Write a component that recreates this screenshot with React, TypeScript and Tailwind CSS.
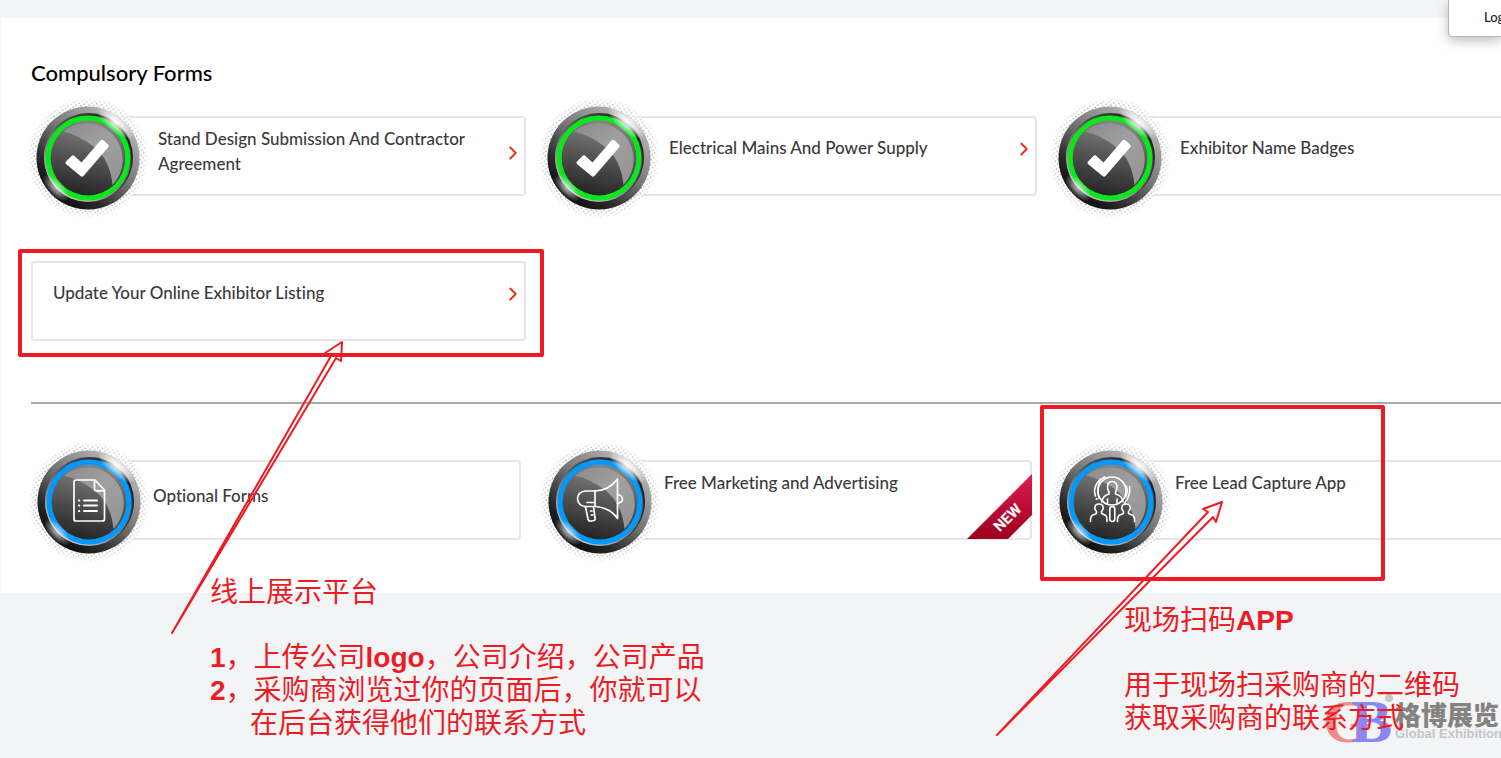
import { ReactNode } from 'react';
import { ChevronRight } from 'lucide-react';

type Form = {
  title: string;
  pad: string;
  icon?: ReactNode;
  arrow?: string;
  isNew?: boolean;
};

const CheckGlyph = () => (
  <path
    d="M38 63.500L43.500 58Q45 56.500 46.500 58L53.500 64.500L72.500 42.500Q74 41 75.500 42.500L80 46.500Q81.500 48 80 49.500L55.500 78Q54 79.500 52.500 78L38 66Q36.700 64.800 38 63.500Z"
    fill="#fff"
  />
);

const DocumentGlyph = () => (
  <g fill="none" stroke="#fff" strokeWidth="1.700" strokeLinejoin="round" strokeLinecap="round">
    <path d="M47 38H66L75.500 48V77Q75.500 79 73.500 79H47Q45 79 45 77V40Q45 38 47 38Z" />
    <path d="M65.500 38.500V47Q65.500 48.800 67.300 48.800H75" />
    <path d="M55 58.500H68M55 63.500H68M55 69H68" strokeWidth="2" />
    <path d="M50 58.500H50.200M50 63.500H50.200M50 69H50.200" strokeWidth="2.200" />
  </g>
);

const MegaphoneGlyph = () => (
  <g fill="none" stroke="#fff" strokeWidth="1.700" strokeLinejoin="round" strokeLinecap="round">
    <path d="M55 49H45Q38 50 37.500 56.500Q38 63.500 45 64.500H55Z" />
    <path d="M55 49Q69 48.500 77.500 37V76.500Q70 65.500 55 64.500" />
    <path d="M77.500 52.500Q82.500 53.500 82.500 57Q82.500 60.500 77.500 61.500" />
    <path d="M47 60.500H54.500" />
    <path d="M45.500 65L48 77Q48.500 79.500 51 79L54 78.500Q55.500 78 55 76L53.500 65" />
    <path d="M50.500 69H52M51.300 73H52.800" />
  </g>
);

const PeopleGlyph = () => (
  <g fill="none" stroke="#fff" strokeWidth="1.600" strokeLinejoin="round" strokeLinecap="round">
    <circle cx="61" cy="49" r="14" />
    <path d="M54 35Q44.500 39 43.500 48.500Q43.500 51 44.500 54M78.500 44.500Q80 53 73.500 61.500" />
    <path d="M49 39Q45 47 48 56.500M75.500 44Q77.500 50 74.500 55" strokeWidth="1.300" />
    <path d="M45.500 57H45.700" strokeWidth="2.200" />
    <path d="M58 52V50Q56.500 48 56.500 45Q56.500 39.500 61.200 39.500Q66 39.500 66 45Q66 48 64.500 50V52Q71.500 53.500 72 60M58 52Q51.500 53.500 51 60M56.500 57V61M66 57V61" />
    <rect x="58.800" y="64.500" width="5" height="15" rx="2.500" />
    <path d="M39.500 79.500V77.500Q39.500 73.500 43 72.500L45.500 71.500V69.500Q43.800 68 43.800 66Q43.800 62 48 62Q52.200 62 52.200 66Q52.200 68 50.500 69.500V71.500L53 72.500Q56 73.500 56 77.500V79.500" />
    <path d="M66.500 79.500V77.500Q66.500 73.500 70 72.500L72.500 71.500V69.500Q70.800 68 70.800 66Q70.800 62 75 62Q79.200 62 79.200 66Q79.200 68 77.500 69.500V71.500L80 72.500Q83.500 73.500 83.500 77.500V79.500" />
  </g>
);

// shared gradients for the round badges
const BadgeDefs = () => (
  <svg className="absolute h-0 w-0" aria-hidden="true">
    <defs>
      <linearGradient id="rim" x1="0.850" y1="0.150" x2="0.250" y2="0.900">
        <stop offset="0" stopColor="#b5b5b5" />
        <stop offset="0.450" stopColor="#777" />
        <stop offset="0.800" stopColor="#2b2b2b" />
        <stop offset="1" stopColor="#111" />
      </linearGradient>
      <linearGradient id="edge" x1="1" y1="0.200" x2="0" y2="0.800">
        <stop offset="0" stopColor="#161616" />
        <stop offset="0.600" stopColor="#555" />
        <stop offset="1" stopColor="#c4c4c4" />
      </linearGradient>
      <linearGradient id="lip" x1="0.800" y1="0" x2="0.200" y2="1">
        <stop offset="0" stopColor="#222" />
        <stop offset="0.500" stopColor="#777" />
        <stop offset="1" stopColor="#c9c9c9" />
      </linearGradient>
      <linearGradient id="disc" x1="0.700" y1="0" x2="0.500" y2="1">
        <stop offset="0" stopColor="#888" />
        <stop offset="0.500" stopColor="#565656" />
        <stop offset="1" stopColor="#262626" />
      </linearGradient>
      <linearGradient id="gloss" x1="0" y1="0" x2="0.800" y2="1">
        <stop offset="0" stopColor="#8a8a8a" />
        <stop offset="0.500" stopColor="#a0a0a0" />
        <stop offset="1" stopColor="#949494" />
      </linearGradient>
      <radialGradient id="shine">
        <stop offset="0" stopColor="#fff" stopOpacity="1" />
        <stop offset="0.350" stopColor="#fff" stopOpacity="0.750" />
        <stop offset="1" stopColor="#fff" stopOpacity="0" />
      </radialGradient>
      <radialGradient id="fade">
        <stop offset="0.860" stopColor="#fff" stopOpacity="0.900" />
        <stop offset="1" stopColor="#fff" stopOpacity="0.150" />
      </radialGradient>
      <pattern id="dots" width="5" height="5" patternUnits="userSpaceOnUse" patternTransform="rotate(10)">
        <circle cx="1.200" cy="1.200" r="0.700" fill="#666" />
        <circle cx="3.700" cy="3.700" r="0.700" fill="#666" />
      </pattern>
      <mask id="halo">
        <circle cx="60" cy="60" r="60" fill="url(#fade)" />
      </mask>
    </defs>
  </svg>
);

const Badge = ({ ring, children }: { ring: string; children: ReactNode }) => (
  <svg viewBox="0 0 120 120" className="relative z-10 -mt-[18px] -mb-[22px] h-[120px] w-[120px] shrink-0" aria-hidden="true">
    <circle cx="60" cy="60" r="58" fill="#fff" fillOpacity="0.700" />
    <circle cx="60" cy="60" r="60" fill="url(#dots)" mask="url(#halo)" />
    <circle cx="60" cy="60" r="51.500" fill="url(#rim)" />
    <circle cx="60.500" cy="59.500" r="44.500" fill="url(#edge)" />
    <circle cx="59.800" cy="60.200" r="43.500" fill="url(#lip)" />
    <circle cx="60" cy="60" r="39.700" fill="none" stroke={ring} strokeWidth="5.400" />
    <circle cx="60" cy="60" r="37.400" fill="url(#disc)" />
    <path d="M35 33.500A36.500 36.500 0 0 1 84.500 87Q82 61 65 48Q50 37 35 33.500Z" fill="url(#gloss)" />
    <ellipse cx="88" cy="24" rx="24" ry="10" transform="rotate(40 88 24)" fill="url(#shine)" />
    <ellipse cx="28" cy="90" rx="17" ry="8" transform="rotate(46 28 90)" fill="url(#shine)" opacity="0.650" />
    {children}
  </svg>
);

const FormCard = ({ form, inset = 'pl-[68px]' }: { form: Form; inset?: string }) => (
  <a href="#" className="flex items-start text-[17px] leading-[25px] font-medium text-[#3a3a3a]">
    {form.icon}
    <div
      className={`relative flex min-h-20 flex-1 border-2 border-[#e6e6e6] ${
        form.icon ? `-ml-[60px] rounded-[4px] ${inset}` : 'rounded-[3px] pl-5'
      }`}
    >
      <span className={`flex-1 ${form.pad}`}>{form.title}</span>
      {form.arrow && <ChevronRight size={22} strokeWidth={2} className={`ml-5 shrink-0 text-[#e8300c] ${form.arrow}`} />}
      {form.isNew && (
        <svg viewBox="0 0 65 65" className="absolute -right-0.5 -bottom-px h-[65px] w-[65px]">
          <defs>
            <linearGradient id="ribbon" x1="0" y1="0" x2="0" y2="1">
              <stop offset="0" stopColor="#e01a4f" />
              <stop offset="1" stopColor="#9c001d" />
            </linearGradient>
          </defs>
          <path d="M0 65L65 0V41L41 65Z" fill="url(#ribbon)" />
          <text
            x="40"
            y="49"
            transform="rotate(-45 40 43)"
            textAnchor="middle"
            className="fill-white font-['Roboto'] text-[15px] font-bold"
          >
            NEW
          </text>
        </svg>
      )}
    </div>
  </a>
);

const green = '#0ae81c';
const blue = '#0099ff';

const compulsory: Form[] = [
  { title: 'Stand Design Submission And Contractor Agreement', pad: 'pt-2', icon: <Badge ring={green}><CheckGlyph /></Badge>, arrow: 'mt-6' },
  { title: 'Electrical Mains And Power Supply', pad: 'pt-[17px]', icon: <Badge ring={green}><CheckGlyph /></Badge>, arrow: 'mt-5' },
  { title: 'Exhibitor Name Badges', pad: 'pt-[17px]', icon: <Badge ring={green}><CheckGlyph /></Badge>, arrow: 'mt-5' },
  { title: 'Update Your Online Exhibitor Listing', pad: 'pt-[17px]', arrow: 'mt-5' },
];

const optional: Form[] = [
  { title: 'Optional Forms', pad: 'pt-[21px]', icon: <Badge ring={blue}><DocumentGlyph /></Badge> },
  { title: 'Free Marketing and Advertising', pad: 'pt-2', icon: <Badge ring={blue}><MegaphoneGlyph /></Badge>, isNew: true },
  { title: 'Free Lead Capture App', pad: 'pt-2', icon: <Badge ring={blue}><PeopleGlyph /></Badge> },
];

// hand-drawn notes that lie over the page
const Annotations = () => (
  <div className="pointer-events-none absolute inset-0 z-20 font-['Liberation_Sans','Noto_Sans_CJK_SC',sans-serif] text-[28px] leading-[33px] whitespace-nowrap text-[#ed1c24]">
    <div className="absolute top-[249px] left-[18px] h-[108px] w-[526px] rounded-[2px] border-4 border-[#ed1c24]" />
    <div className="absolute top-[405px] left-[1040px] h-[176px] w-[345px] rounded-[2px] border-4 border-[#ed1c24]" />
    <svg width="1501" height="758" className="absolute top-0 left-0" fill="none" stroke="#ed1c24" strokeWidth="2" strokeLinejoin="round">
      <path d="M172 633L331 356L325 353L342 342L341 361L336 358Z" />
      <path d="M997 735L1208 512L1203 509L1222 502L1216 522L1213 517Z" />
    </svg>
    <div className="absolute top-[576px] left-[210px]">
      <p className="mb-8">线上展示平台</p>
      <p><b className="font-bold">1</b>，上传公司<b className="font-bold">logo</b>，公司介绍，公司产品</p>
      <p><b className="font-bold">2</b>，采购商浏览过你的页面后，你就可以</p>
      <p className="pl-10">在后台获得他们的联系方式</p>
    </div>
    <div className="absolute top-[604px] left-[1124px]">
      <p className="mb-8">现场扫码<b className="font-bold">APP</b></p>
      <p>用于现场扫采购商的二维码</p>
      <p>获取采购商的联系方式</p>
    </div>
  </div>
);

const Watermark = () => (
  <div className="pointer-events-none absolute top-[692px] left-[1324px] z-10 flex">
    <svg width="71" height="56" viewBox="0 0 71 56" className="overflow-visible font-['Liberation_Serif'] text-[62px] font-bold">
      <text x="-1" y="50" fill="#f08c8c">G</text>
      <text x="27" y="50" fill="#8a86f4">B</text>
      <circle cx="65" cy="6" r="4" fill="#c9c9c9" />
    </svg>
    <div className="whitespace-nowrap">
      <div className="pt-1.5 font-['Noto_Sans_CJK_SC',sans-serif] text-[26px] leading-8 font-black text-[#85827f]">格博展览</div>
      <div className="-mt-1 font-['Liberation_Sans'] text-[13px] leading-4 font-bold text-[#c6c6c6]">Global Exhibition</div>
    </div>
  </div>
);

export default function App() {
  return (
    <div className="relative min-h-screen overflow-hidden bg-[#f2f4f6] pt-[18px] font-['Lato',sans-serif] [font-variant-ligatures:none]">
      <BadgeDefs />
      <button className="absolute top-0 right-0 z-10 h-[37px] w-[53px] overflow-hidden rounded-bl-[4px] border-b border-l border-[#b8b8b8] bg-white pl-[35px] text-left text-[13px] font-medium text-[#222] shadow-[0_4px_12px_rgba(0,0,0,0.25)]">
        Log
      </button>
      <main className="ml-px bg-white pt-[41px] pb-[53px] pl-[30px]">
        <h2 className="mb-[29px] text-[22px] leading-7 font-medium text-black">Compulsory Forms</h2>
        <div className="-mr-[47px] grid grid-cols-3 gap-x-4 gap-y-[65px]">
          {compulsory.map((form) => (
            <div key={form.title} className={form.icon ? '-ml-[3px]' : ''}>
              <FormCard form={form} />
            </div>
          ))}
        </div>
        <hr className="mt-[61px] mb-14 border-t-2 border-[#aaa]" />
        <div className="-mr-[42px] -ml-[5px] grid grid-cols-3 gap-x-4">
          {optional.map((form) => (
            <div key={form.title} className="ml-[3px]">
              <FormCard form={form} inset="pl-[62px]" />
            </div>
          ))}
        </div>
      </main>
      <Annotations />
      <Watermark />
    </div>
  );
}
